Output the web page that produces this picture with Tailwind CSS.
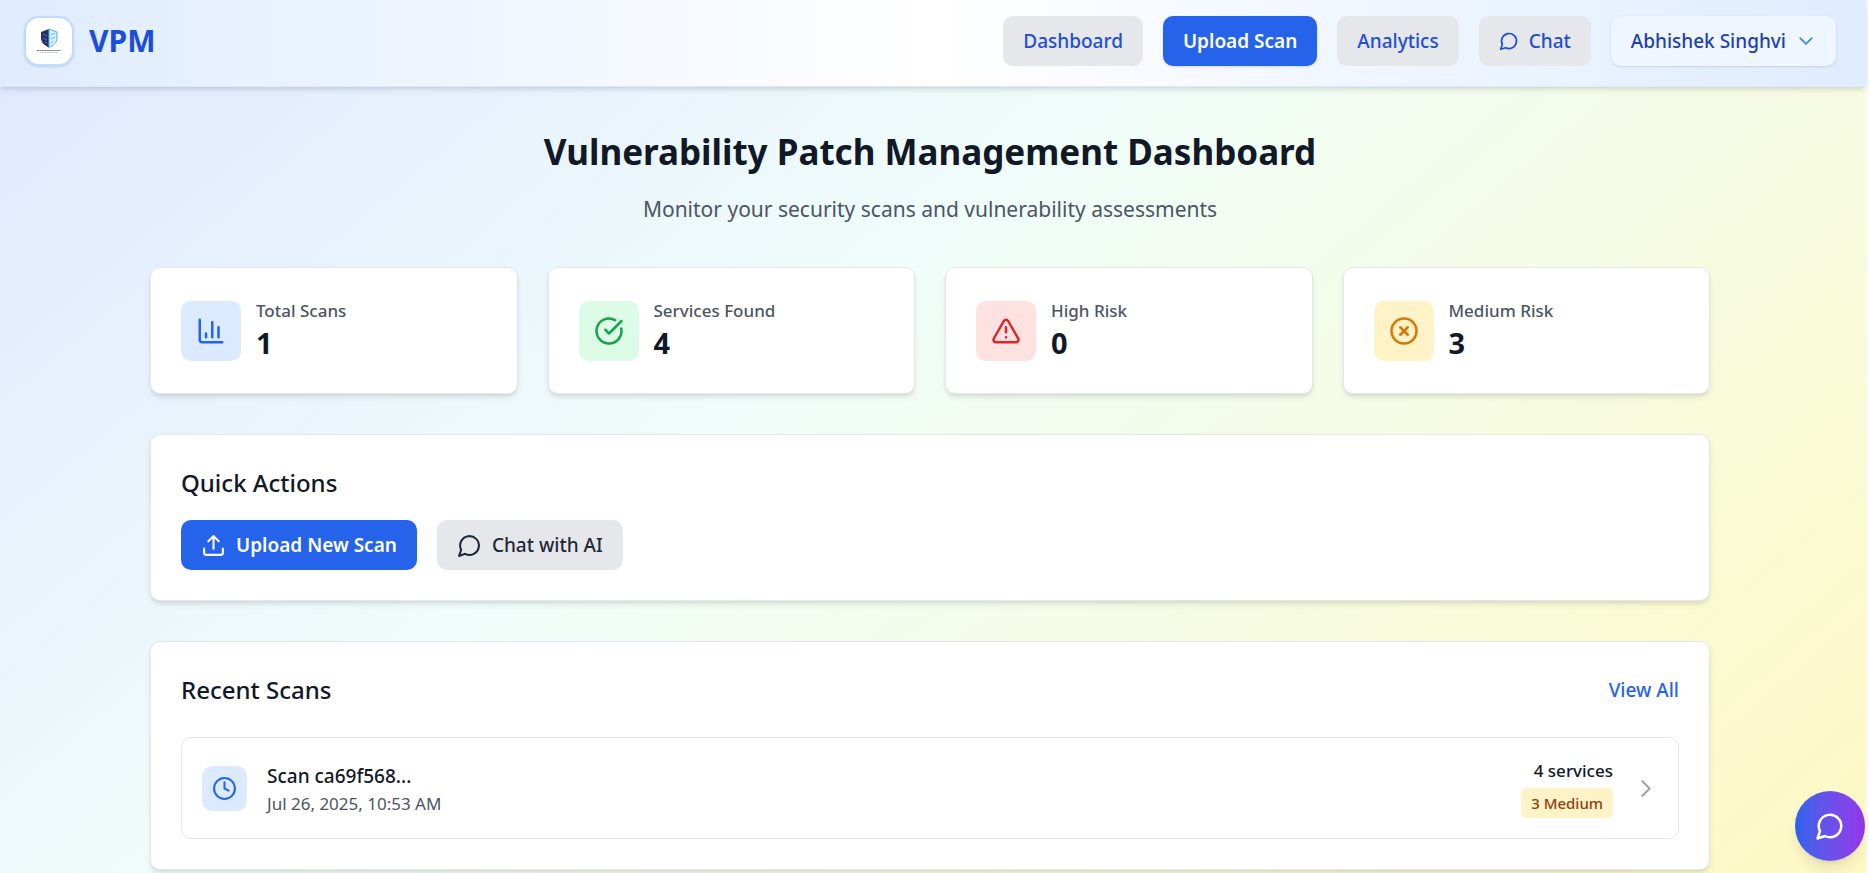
<!DOCTYPE html>
<html lang="en">
<head>
<meta charset="utf-8">
<meta name="viewport" content="width=device-width, initial-scale=1">
<title>VPM Dashboard</title>
<script src="https://cdn.jsdelivr.net/npm/@tailwindcss/browser@4"></script>
</head>
<body class="bg-gray-50 pr-[3px] font-['Noto_Sans','Open_Sans',sans-serif] text-[#111827]">
<div class="min-h-screen bg-linear-[140deg,#e0e7ff_0%,#f0fdfa_42%,#fef9c3_100%]">
  <header class="relative flex items-center justify-between border-b border-[#dbeafe] bg-linear-to-r from-[#dfecfe] via-white to-[#dfecfe] pt-4 pr-[30px] pb-5 pl-6 shadow-md">
    <a href="#" class="flex items-center gap-[15px]">
      <span class="flex size-[50px] items-center justify-center rounded-[15px] border-2 border-[#bfdbfe] bg-white shadow-sm">
        <svg class="size-[30px]" viewBox="0 0 30 30" aria-hidden="true">
          <path d="M15 3 7 6v6c0 4.500 3.500 7.500 8 9.500Z" fill="#25306b"/>
          <path d="M15 3l8 3v6c0 4.500-3.500 7.500-8 9.500Z" fill="#d5effa" stroke="#4fb3d9" stroke-width="1"/>
          <path d="M9 8l4 2M9 12l4 2M11 16l2 1" stroke="#7c8cc4" stroke-width=".7"/>
          <path d="M17 9l4-2M17 13l4-2M17 17l2-1.500" stroke="#4fa5cf" stroke-width=".8"/>
          <path d="M3 24.500h24" stroke="#7b818d" stroke-width="1.200" stroke-dasharray="2 .4"/>
          <path d="M6 26.500h18" stroke="#c3c7cf" stroke-width=".8"/>
        </svg>
      </span>
      <span class="text-[30px] leading-9 font-bold text-[#1d4ed8]">VPM</span>
    </a>
    <nav class="flex items-center gap-5 text-[19px] leading-[30px] font-medium text-[#1d4ed8]">
      <a href="#" class="rounded-[10px] bg-gray-200 px-5 py-[10px]">Dashboard</a>
      <a href="#" class="rounded-[10px] bg-[#2563eb] px-5 py-[10px] font-semibold text-white shadow-sm">Upload Scan</a>
      <a href="#" class="rounded-[10px] bg-gray-200 px-5 py-[10px]">Analytics</a>
      <a href="#" class="flex items-center gap-[10px] rounded-[10px] bg-gray-200 px-5 py-[10px]">
        <svg class="size-5" viewBox="0 0 24 24" fill="none" stroke="currentColor" stroke-width="2" stroke-linecap="round" stroke-linejoin="round" aria-hidden="true"><path d="M7.900 20A9 9 0 1 0 4 16.100L2 22Z"/></svg>
        Chat</a>
      <button type="button" class="flex items-center gap-[10px] rounded-[10px] bg-[#eff6ff] px-5 py-[10px] text-[#1e40af] shadow-sm">Abhishek Singhvi
        <svg class="size-5 text-[#3b82f6]" viewBox="0 0 24 24" fill="none" stroke="currentColor" stroke-width="2" stroke-linecap="round" stroke-linejoin="round" aria-hidden="true"><path d="m5 8.500 7 7 7-7"/></svg>
      </button>
    </nav>
  </header>

  <main class="mx-auto flex max-w-[1606px] flex-col gap-10 pt-10 pr-[26px] pb-[3px] pl-5">
    <div class="text-center">
      <h1 class="text-[35px] leading-[50px] font-bold">Vulnerability Patch Management Dashboard</h1>
      <p class="mt-[15px] text-[21px] leading-[35px] text-[#4b5563]">Monitor your security scans and vulnerability assessments</p>
    </div>

    <section class="grid grid-cols-4 gap-[30px]">
      <div class="flex items-center gap-[15px] rounded-[10px] border border-gray-200 bg-white p-[30px] shadow-md">
        <span class="flex size-[60px] items-center justify-center rounded-[10px] bg-[#dbeafe] text-[#2563eb]">
          <svg class="size-[30px]" viewBox="0 0 24 24" fill="none" stroke="currentColor" stroke-width="2" stroke-linecap="round" stroke-linejoin="round" aria-hidden="true"><path d="M3 3v16a2 2 0 0 0 2 2h16M18 17V9M13 17V5M8 17v-3"/></svg>
        </span>
        <div><p class="text-[17px] leading-[25px] font-medium text-[#4b5563]">Total Scans</p><p class="text-[29px] leading-10 font-bold">1</p></div>
      </div>
      <div class="flex items-center gap-[15px] rounded-[10px] border border-gray-200 bg-white p-[30px] shadow-md">
        <span class="flex size-[60px] items-center justify-center rounded-[10px] bg-[#dcfce7] text-[#16a34a]">
          <svg class="size-[30px]" viewBox="0 0 24 24" fill="none" stroke="currentColor" stroke-width="2" stroke-linecap="round" stroke-linejoin="round" aria-hidden="true"><path d="M21.801 10A10 10 0 1 1 17 3.335"/><path d="m9 11 3 3L22 4"/></svg>
        </span>
        <div><p class="text-[17px] leading-[25px] font-medium text-[#4b5563]">Services Found</p><p class="text-[29px] leading-10 font-bold">4</p></div>
      </div>
      <div class="flex items-center gap-[15px] rounded-[10px] border border-gray-200 bg-white p-[30px] shadow-md">
        <span class="flex size-[60px] items-center justify-center rounded-[10px] bg-[#fee2e2] text-[#dc2626]">
          <svg class="size-[30px]" viewBox="0 0 24 24" fill="none" stroke="currentColor" stroke-width="2" stroke-linecap="round" stroke-linejoin="round" aria-hidden="true"><path d="m21.730 18-8-14a2 2 0 0 0-3.480 0l-8 14A2 2 0 0 0 4 21h16a2 2 0 0 0 1.730-3M12 9v4M12 17h.01"/></svg>
        </span>
        <div><p class="text-[17px] leading-[25px] font-medium text-[#4b5563]">High Risk</p><p class="text-[29px] leading-10 font-bold">0</p></div>
      </div>
      <div class="flex items-center gap-[15px] rounded-[10px] border border-gray-200 bg-white p-[30px] shadow-md">
        <span class="flex size-[60px] items-center justify-center rounded-[10px] bg-[#fef3c7] text-[#d97706]">
          <svg class="size-[30px]" viewBox="0 0 24 24" fill="none" stroke="currentColor" stroke-width="2" stroke-linecap="round" stroke-linejoin="round" aria-hidden="true"><circle cx="12" cy="12" r="10"/><path d="m15 9-6 6M9 9l6 6"/></svg>
        </span>
        <div><p class="text-[17px] leading-[25px] font-medium text-[#4b5563]">Medium Risk</p><p class="text-[29px] leading-10 font-bold">3</p></div>
      </div>
    </section>

    <section class="rounded-[10px] border border-gray-200 bg-white p-[30px] shadow-md">
      <h2 class="text-[24px] leading-[35px] font-medium">Quick Actions</h2>
      <div class="mt-5 flex gap-5 text-[19px] leading-[30px]">
        <button type="button" class="flex items-center gap-[10px] rounded-[10px] bg-[#2563eb] px-5 py-[10px] font-semibold text-white">
          <svg class="size-[25px]" viewBox="0 0 24 24" fill="none" stroke="currentColor" stroke-width="2" stroke-linecap="round" stroke-linejoin="round" aria-hidden="true"><path d="M21 15v4a2 2 0 0 1-2 2H5a2 2 0 0 1-2-2v-4M17 8l-5-5-5 5M12 3v12"/></svg>
          Upload New Scan</button>
        <button type="button" class="flex items-center gap-[10px] rounded-[10px] bg-gray-200 px-5 py-[10px] font-medium text-[#1f2937]">
          <svg class="size-[25px]" viewBox="0 0 24 24" fill="none" stroke="currentColor" stroke-width="2" stroke-linecap="round" stroke-linejoin="round" aria-hidden="true"><path d="M7.900 20A9 9 0 1 0 4 16.100L2 22Z"/></svg>
          Chat with AI</button>
      </div>
    </section>

    <section class="rounded-[10px] border border-gray-200 bg-white p-[30px] shadow-md">
      <div class="flex items-center justify-between">
        <h2 class="text-[24px] leading-[35px] font-medium">Recent Scans</h2>
        <a href="#" class="text-[19px] leading-[30px] font-medium text-[#2563eb]">View All</a>
      </div>
      <a href="#" class="mt-[30px] flex items-center gap-5 rounded-[10px] border border-gray-200 p-5">
        <span class="flex size-[45px] items-center justify-center rounded-[10px] bg-[#dbeafe] text-[#2563eb]">
          <svg class="size-[25px]" viewBox="0 0 24 24" fill="none" stroke="currentColor" stroke-width="2" stroke-linecap="round" stroke-linejoin="round" aria-hidden="true"><circle cx="12" cy="12" r="10"/><path d="M12 6v6l4 2"/></svg>
        </span>
        <span class="flex grow flex-col">
          <span class="text-[19px] leading-[30px] font-medium">Scan ca69f568...</span>
          <span class="text-[17px] leading-[25px] text-[#4b5563]">Jul 26, 2025, 10:53 AM</span>
        </span>
        <span class="flex flex-col items-end gap-[5px]">
          <span class="text-[17px] leading-[25px] font-medium">4 services</span>
          <span class="rounded-[5px] bg-[#fef3c7] px-[10px] py-[5px] text-[15px] leading-5 font-medium text-[#92400e]">3 Medium</span>
        </span>
        <svg class="size-[25px] text-[#9ca3af]" viewBox="0 0 24 24" fill="none" stroke="currentColor" stroke-width="2" stroke-linecap="round" stroke-linejoin="round" aria-hidden="true"><path d="m9 19 7-7-7-7"/></svg>
      </a>
    </section>
  </main>
</div>
<button type="button" aria-label="Open chat" class="fixed right-1 bottom-3 flex size-[70px] items-center justify-center rounded-full bg-linear-to-r from-[#2563eb] to-[#9333ea] text-white shadow-lg">
  <svg class="size-[30px]" viewBox="0 0 24 24" fill="none" stroke="currentColor" stroke-width="2" stroke-linecap="round" stroke-linejoin="round" aria-hidden="true"><path d="M7.900 20A9 9 0 1 0 4 16.100L2 22Z"/></svg>
</button>
</body>
</html>
